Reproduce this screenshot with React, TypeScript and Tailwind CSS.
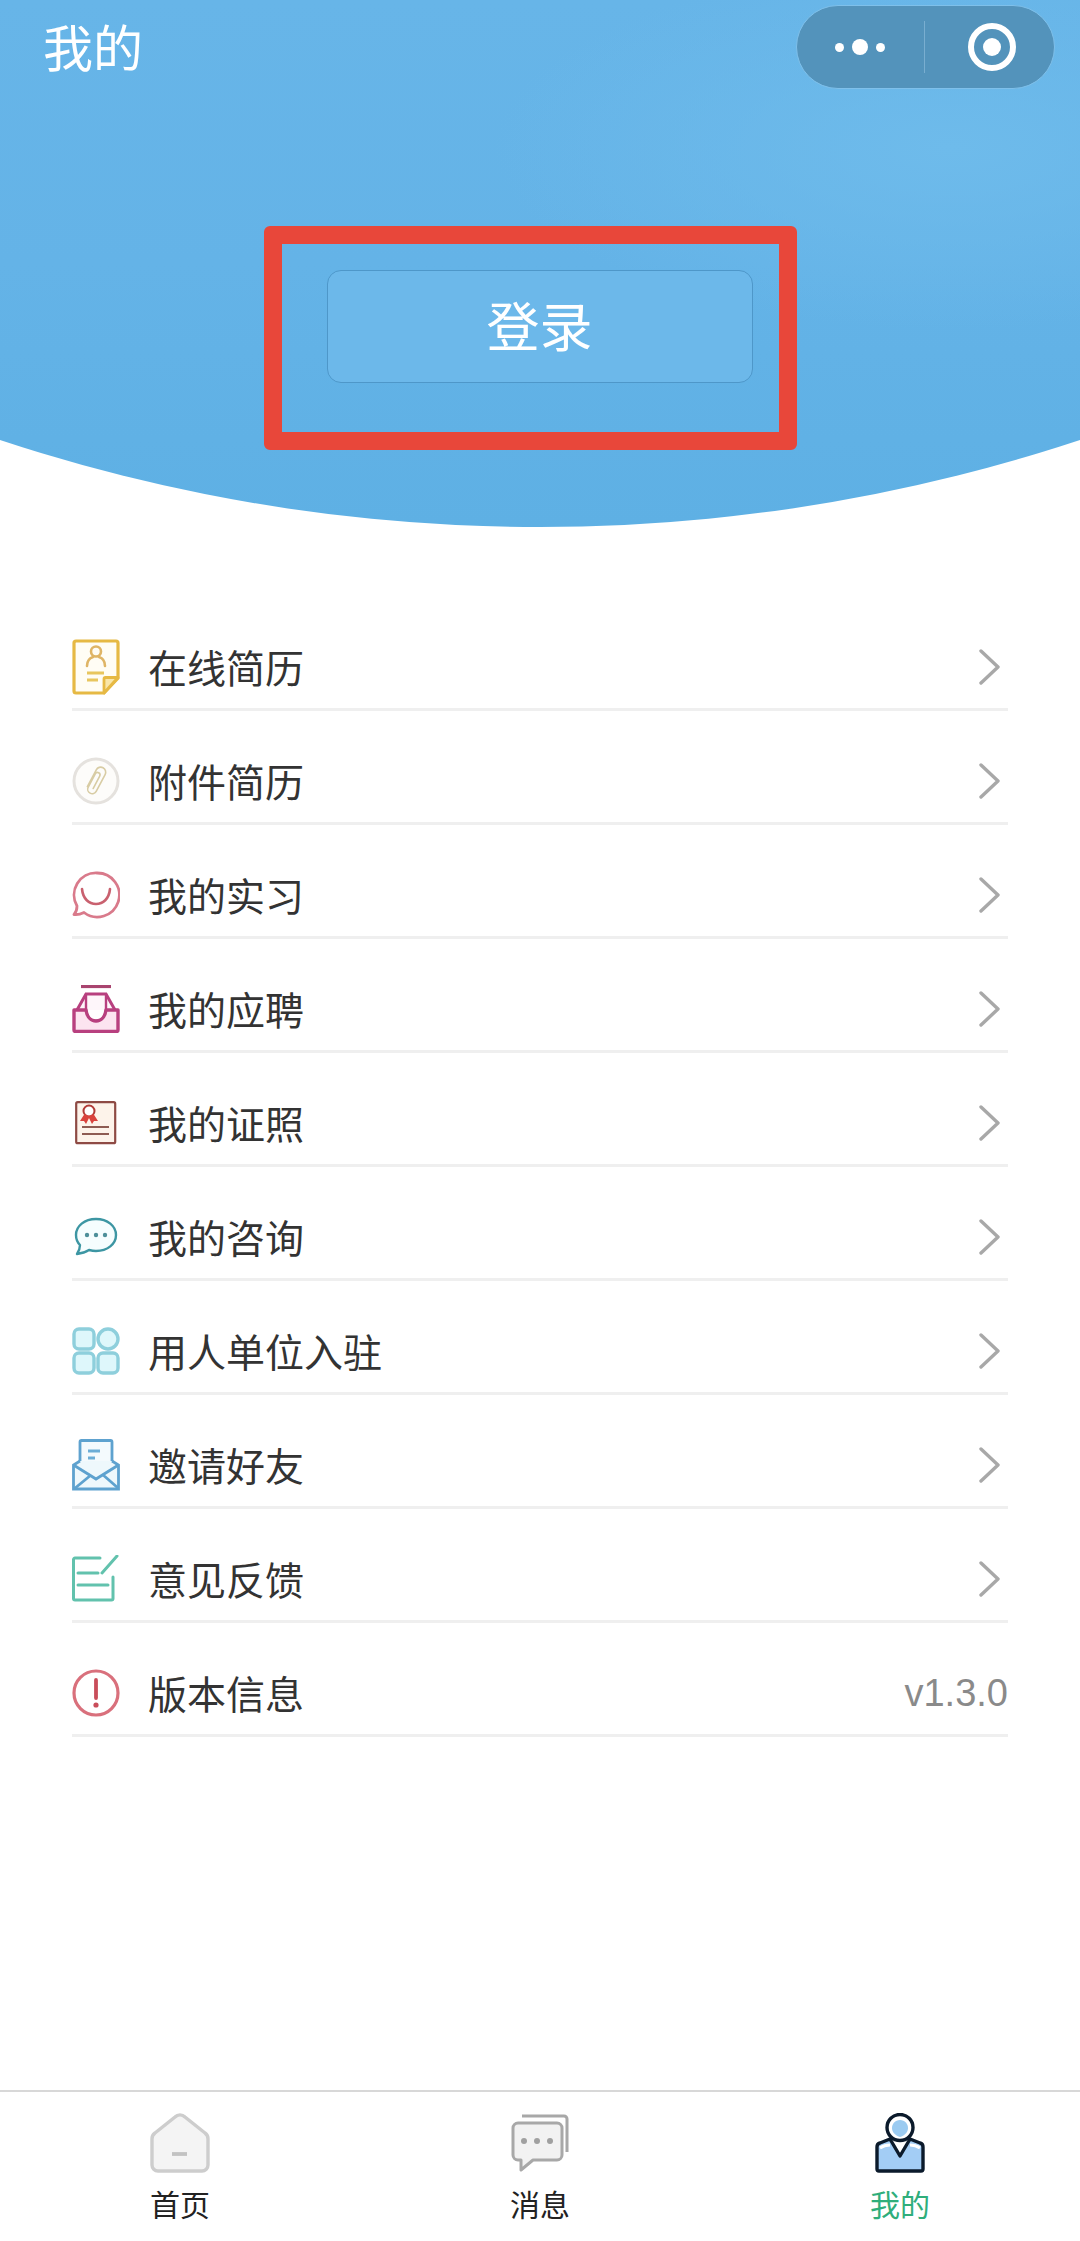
import React from 'react';

const FONT = "font-['Noto_Sans_CJK_SC','Liberation_Sans',sans-serif]";

const ResumeIcon = () => (
  <svg viewBox="0 0 48 56" className="w-12 h-14" fill="none">
    <path d="M2 4a2 2 0 0 1 2-2h40a2 2 0 0 1 2 2v35L32 54H4a2 2 0 0 1-2-2z" fill="#fffdf5" stroke="#e6b944" strokeWidth="3.2" />
    <path d="M32 54V40a1.500 1.500 0 0 1 1.500-1.500H46z" fill="#f9e6a8" stroke="#e6b944" strokeWidth="2.800" strokeLinejoin="round" />
    <circle cx="24" cy="12.500" r="5" stroke="#dfb566" strokeWidth="2.600" />
    <path d="M15 27c0-5 3-8 6-9M33 27c0-5-3-8-6-9" stroke="#dfb566" strokeWidth="2.600" strokeLinecap="round" />
    <path d="M15 34h17M15 41h11" stroke="#e8c65e" strokeWidth="2.800" />
  </svg>
);

const ClipIcon = () => (
  <svg viewBox="0 0 48 48" className="w-12 h-12" fill="none">
    <circle cx="24" cy="24" r="22" fill="#fdfcfa" stroke="#e5e2de" strokeWidth="3" />
    <path d="M19 33V14a5 5 0 0 1 10 0v19a4.500 4.500 0 0 1-9 0V18a2.500 2.500 0 0 1 5 0v14" stroke="#d8cca4" strokeWidth="1.600" strokeLinecap="round" transform="rotate(28 24 24)" />
  </svg>
);

const SmileIcon = () => (
  <svg viewBox="0 0 48 48" className="w-12 h-12" fill="none">
    <path d="M25 2a22 22 0 1 1-13 39.500c-3 1.500-6.500 2.500-10 2 2-2 3-5 3-8.500A22 22 0 0 1 25 2z" fill="#fff" stroke="#d97a8b" strokeWidth="2.800" strokeLinejoin="round" />
    <path d="M10 18c1 10 7 15 14 15s13-5 14-15" stroke="#c9616f" strokeWidth="2.600" strokeLinecap="round" />
  </svg>
);

const InboxIcon = () => (
  <svg viewBox="0 0 48 48" className="w-12 h-12" fill="none">
    <path d="M9 1.500h30" stroke="#a9446f" strokeWidth="3.200" />
    <path d="M5 25 14 9h20l9 16" fill="#fef6fa" stroke="#b8407f" strokeWidth="3" />
    <path d="M14 9v16c1 7 5 11 10 11s9-4 10-11V9" stroke="#b8407f" strokeWidth="2.400" />
    <path d="M2 25h12c1 7 5 11 10 11s9-4 10-11h12v20a1.500 1.500 0 0 1-1.500 1.500h-41A1.500 1.500 0 0 1 2 45z" fill="#fce4f0" stroke="#b8407f" strokeWidth="3.400" strokeLinejoin="round" />
  </svg>
);

const CertIcon = () => (
  <svg viewBox="0 0 42 44" className="w-[42px] h-[44px]" fill="none">
    <rect x="1.200" y="1.200" width="39" height="41" rx="1.500" fill="#fdf3ea" stroke="#8e4a44" strokeWidth="2.200" />
    <circle cx="14" cy="10" r="5.500" fill="#fff" stroke="#b13a36" strokeWidth="2" />
    <path d="M9.500 13 5 20l4 0 2 3 3-6 3 6 2-3 4 0-4.500-7-4.500 2z" fill="#d9433d" />
    <path d="M7 26h27M7 33h27" stroke="#8e5b52" strokeWidth="2" />
  </svg>
);

const ChatIcon = () => (
  <svg viewBox="0 0 44 40" className="w-11 h-10" fill="none">
    <path d="M22 2C10.500 2 2 9 2 18c0 4 1.500 7.500 4 10 0 3-1 6-3 9 4.500-.5 9-2 12-4 2 .5 4.500 1 7 1 11.500 0 20-7 20-16S33.500 2 22 2z" fill="#f6fdfe" stroke="#3d96a3" strokeWidth="2.400" strokeLinejoin="round" />
    <circle cx="13" cy="18" r="2.200" fill="#4e8f99" />
    <circle cx="22" cy="18" r="2.200" fill="#4e8f99" />
    <circle cx="31" cy="18" r="2.200" fill="#4e8f99" />
  </svg>
);

const GridIcon = () => (
  <svg viewBox="0 0 48 48" className="w-12 h-12" fill="#def7fb" stroke="#8ecfdc" strokeWidth="3.400">
    <rect x="2" y="2" width="20" height="20" rx="5" />
    <circle cx="36" cy="12" r="10" />
    <rect x="2" y="26" width="20" height="20" rx="5" />
    <rect x="26" y="26" width="20" height="20" rx="5" />
  </svg>
);

const MailIcon = () => (
  <svg viewBox="0 0 48 52" className="w-12 h-[52px]" fill="none">
    <path d="M8 26V3a1.500 1.500 0 0 1 1.500-1.500h29A1.500 1.500 0 0 1 40 3v26" fill="#f4fafd" stroke="#5ea2cf" strokeWidth="2.800" />
    <path d="M16 12h12M16 19h7" stroke="#6cadd6" strokeWidth="2.800" />
    <path d="M8 22 1.500 26v24h45V26L40 22" fill="#eef8fc" stroke="#5ea2cf" strokeWidth="2.800" />
    <path d="M1.500 26 24 40l22.500-14M2 50l17-14M30 35l16 14" stroke="#5ea2cf" strokeWidth="2.800" />
  </svg>
);

const FeedbackIcon = () => (
  <svg viewBox="0 0 48 48" className="w-12 h-12" fill="none" stroke="#62c2ad" strokeWidth="3" strokeLinecap="round">
    <path d="M28 3H3a1.500 1.500 0 0 0-1.500 1.500v39A1.500 1.500 0 0 0 3 45h36.500a1.500 1.500 0 0 0 1.500-1.500V22" />
    <path d="M6 18h20M6 30h30" />
    <path d="M30 18 45 1" />
  </svg>
);

const AlertIcon = () => (
  <svg viewBox="0 0 48 48" className="w-12 h-12" fill="none">
    <circle cx="24" cy="24" r="22" fill="#fff" stroke="#d9707c" strokeWidth="3.200" />
    <path d="M24 11v18" stroke="#c94d5a" strokeWidth="3.800" strokeLinecap="round" />
    <circle cx="24" cy="36" r="2.600" fill="#c94d5a" />
  </svg>
);

const HomeTabIcon = () => (
  <svg viewBox="0 0 60 60" className="w-[60px] h-[60px]" fill="none">
    <path d="M25 4a7 7 0 0 1 10 0l20 16a7 7 0 0 1 3 6v26a6 6 0 0 1-6 6H8a6 6 0 0 1-6-6V26a7 7 0 0 1 3-6z" fill="#f4f4f4" stroke="#cdcdcd" strokeWidth="3.400" />
    <path d="M22 41h15" stroke="#c2c2c2" strokeWidth="3.800" />
  </svg>
);

const MsgTabIcon = () => (
  <svg viewBox="0 0 58 58" className="w-[58px] h-[58px]" fill="none">
    <path d="M11 2h42a3 3 0 0 1 3 3v33" stroke="#a8a8a8" strokeWidth="3" />
    <path d="M7 9h39a5 5 0 0 1 5 5v27a5 5 0 0 1-5 5H22L10 56V46H7a5 5 0 0 1-5-5V14a5 5 0 0 1 5-5z" fill="#f2f2f2" stroke="#a8a8a8" strokeWidth="3" strokeLinejoin="round" />
    <circle cx="13" cy="27" r="3" fill="#a0a0a0" />
    <circle cx="26" cy="27" r="3" fill="#a0a0a0" />
    <circle cx="39" cy="27" r="3" fill="#a0a0a0" />
  </svg>
);

const MeTabIcon = () => (
  <svg viewBox="0 0 50 60" className="w-[50px] h-[60px]" fill="none">
    <path d="M15 26 5 30a4 4 0 0 0-3 4v22a2 2 0 0 0 2 2h42a2 2 0 0 0 2-2V34a4 4 0 0 0-3-4l-10-4-10 17z" fill="#a3cdf5" stroke="#0b1a2b" strokeWidth="3.400" strokeLinejoin="round" />
    <path d="M5 35c3-2 7-3 10-3M45 35c-3-2-7-3-10-3" stroke="#fff" strokeWidth="3" />
    <circle cx="25" cy="14.500" r="13" fill="#fff" stroke="#0b1a2b" strokeWidth="3.400" />
    <path d="M25 7c5 0 8 4 8 8 0 3-2 7-8 9-6-2-8-6-8-9 0-4 3-8 8-8z" fill="#9bcbf1" />
  </svg>
);

const Chevron = () => (
  <svg viewBox="0 0 21 36" className="w-[21px] h-[36px] mr-[8px]" fill="none">
    <path d="M2 2l17 16L2 34" stroke="#a8a8a8" strokeWidth="3.400" strokeLinecap="round" strokeLinejoin="round" />
  </svg>
);

const rows = [
  { label: '在线简历', icon: <ResumeIcon /> },
  { label: '附件简历', icon: <ClipIcon /> },
  { label: '我的实习', icon: <SmileIcon /> },
  { label: '我的应聘', icon: <InboxIcon /> },
  { label: '我的证照', icon: <CertIcon /> },
  { label: '我的咨询', icon: <ChatIcon /> },
  { label: '用人单位入驻', icon: <GridIcon /> },
  { label: '邀请好友', icon: <MailIcon /> },
  { label: '意见反馈', icon: <FeedbackIcon /> },
  { label: '版本信息', icon: <AlertIcon />, version: 'v1.3.0' },
];

const tabs = [
  { label: '首页', icon: <HomeTabIcon /> },
  { label: '消息', icon: <MsgTabIcon /> },
  { label: '我的', icon: <MeTabIcon />, active: true },
];

export default function App() {
  return (
    <div className={`w-[1080px] h-[2241px] bg-white flex flex-col ${FONT}`}>
      {/* Blue header, the curve is a big circle clip */}
      <header className="h-[527px] shrink-0 flex flex-col bg-[radial-gradient(ellipse_at_88%_28%,#6ebbeb_0%,transparent_34%),linear-gradient(#67b5e8,#64b3e7_50%,#5eb0e4)] [clip-path:circle(1719px_at_50%_-1192px)]">
        <div className="h-[226px] shrink-0 flex items-start justify-between pl-[43px] pr-[25px] pt-[5px]">
          <h1 className="text-[50px] leading-[80px] text-white font-normal">我的</h1>
          <div className="w-[259px] h-[84px] rounded-full bg-[#5393bb] border border-[#7fc0ea] flex items-center">
            <div className="flex-1 flex items-center justify-center gap-[8px] pr-[2px]">
              <span className="w-[9px] h-[9px] rounded-full bg-white" />
              <span className="w-[16px] h-[16px] rounded-full bg-white" />
              <span className="w-[9px] h-[9px] rounded-full bg-white" />
            </div>
            <div className="w-px h-[52px] bg-[#79aed0]" />
            <div className="flex-1 flex items-center justify-center pl-[4px]">
              <div className="w-[48px] h-[48px] rounded-full border-[6px] border-white flex items-center justify-center">
                <span className="w-[18px] h-[18px] rounded-full bg-white" />
              </div>
            </div>
          </div>
        </div>
        <div className="flex justify-center pr-[20px]">
          <div className="w-[533px] h-[224px] rounded-md border-[18px] border-[#e8473a] flex justify-center pt-[26px] pl-[19px]">
            <button className="w-[426px] h-[113px] shrink-0 rounded-[14px] border border-[#4e97c9] bg-[#6cb8ea] text-white text-[53px] leading-none pb-[4px]">
              登录
            </button>
          </div>
        </div>
      </header>

      <ul className="mt-[70px] px-[72px] flex flex-col">
        {rows.map((row) => (
          <li key={row.label} className="h-[114px] flex items-center border-b-[3px] border-[#efefef] pt-[28px]">
            <div className="w-[48px] h-[56px] flex items-center justify-center shrink-0">{row.icon}</div>
            <span className="ml-[28px] flex-1 text-[39px] leading-none text-[#333]">{row.label}</span>
            {row.version ? (
              <span className="text-[38px] leading-none text-[#8a8a8a] font-['Liberation_Sans',sans-serif]">{row.version}</span>
            ) : (
              <Chevron />
            )}
          </li>
        ))}
      </ul>

      <nav className="mt-auto h-[151px] border-t-2 border-[#d8d8d8] grid grid-cols-3">
        {tabs.map((tab) => (
          <div key={tab.label} className="flex flex-col items-center pt-[20px]">
            <div className="h-[62px] flex items-center">{tab.icon}</div>
            <span className={`mt-[11px] text-[30px] leading-[36px] ${tab.active ? 'text-[#2fae7b]' : 'text-[#222]'}`}>{tab.label}</span>
          </div>
        ))}
      </nav>
    </div>
  );
}
